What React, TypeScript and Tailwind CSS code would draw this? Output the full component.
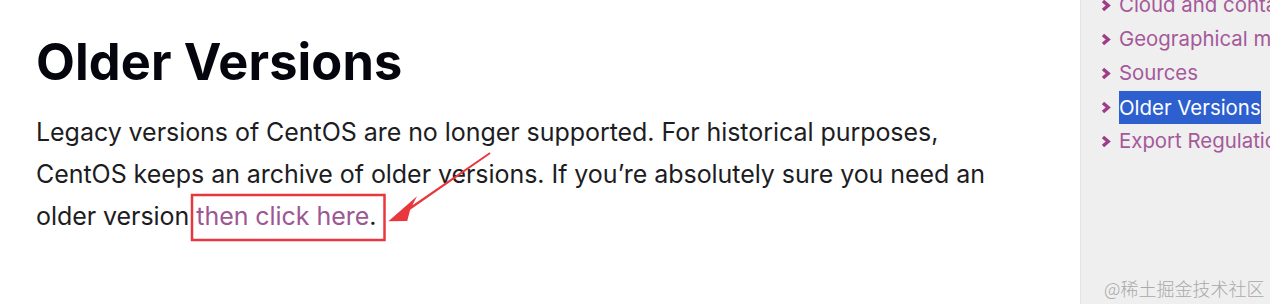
import React from "react";

const items = [
  "Cloud and containers",
  "Geographical mirrors",
  "Sources",
  "Older Versions",
  "Export Regulations",
];

function Chevron() {
  return (
    <svg width="10" height="13" viewBox="0 0 10 13" className="shrink-0">
      <polyline points="2,2 7.2,6.5 2,11" fill="none" stroke="#9e3c8a" strokeWidth="3.4" strokeLinejoin="miter" />
    </svg>
  );
}

export default function App() {
  return (
    <div className="relative flex w-[1270px] h-[304px] overflow-hidden bg-white" style={{ fontFamily: "Inter, 'Noto Sans', sans-serif" }}>
      <main className="w-[1080px] shrink-0 pl-[36px] pt-[32px]">
        <h1 className="text-[50.5px] leading-[60px] font-bold text-[#05050d] tracking-[0.1px]">Older Versions</h1>
        <p className="mt-[19px] text-[25px] leading-[42px] text-[#1d1d1f] whitespace-nowrap tracking-[-0.05px]">
          Legacy versions of CentOS are no longer supported. For historical purposes,
          <br />
          CentOS keeps an archive of older versions. If you’re absolutely sure you need an
          <br />
          older version <span className="text-[#9d5893]">then click here</span>.
        </p>
      </main>
      <aside className="flex-1 bg-[#efefef] border-l border-[#e4e4e4] flex flex-col relative">
        <ul className="mt-[-12px] pl-[20px] flex flex-col">
          {items.map((t) => (
            <li key={t} className="flex items-center gap-[8px] h-[34px] whitespace-nowrap">
              <Chevron />
              {t === "Older Versions" ? (
                <span className="h-[33px] leading-[33px] bg-[#2e5fcf] text-white text-[20.4px]">{t}</span>
              ) : (
                <span className="text-[20.4px] leading-[34px] text-[#a5599a]">{t}</span>
              )}
            </li>
          ))}
        </ul>
        <div className="mt-auto mb-[5px] ml-[23px] text-[18px] leading-[22px] text-[#a9a9a9] whitespace-nowrap" style={{ fontFamily: "'Noto Sans CJK SC', sans-serif", fontWeight: 300 }}>
          @稀土掘金技术社区
        </div>
      </aside>
      <svg className="absolute left-0 top-0 pointer-events-none" width="1270" height="304">
        <rect x="192" y="195" width="192.5" height="45" fill="none" stroke="#e8383d" strokeWidth="2.5" />
        <polygon
          points="489.6,152.2 412.4,205.2 417,196.2 388.4,221.2 407.2,221 410.2,209.8 490.6,153.8"
          fill="#e8383d"
        />
      </svg>
    </div>
  );
}
